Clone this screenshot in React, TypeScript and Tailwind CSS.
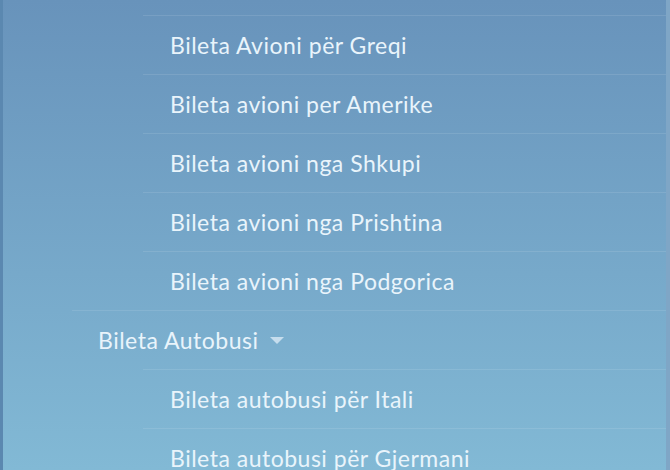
import React from 'react'

type Item = { label: string; level: 1 | 2; caret?: boolean }

const items: Item[] = [
  { label: 'Bileta Avioni për Greqi', level: 2 },
  { label: 'Bileta avioni per Amerike', level: 2 },
  { label: 'Bileta avioni nga Shkupi', level: 2 },
  { label: 'Bileta avioni nga Prishtina', level: 2 },
  { label: 'Bileta avioni nga Podgorica', level: 2 },
  { label: 'Bileta Autobusi', level: 1, caret: true },
  { label: 'Bileta autobusi për Itali', level: 2 },
  { label: 'Bileta autobusi për Gjermani', level: 2 },
]

const MenuRow = ({ item }: { item: Item }) => {
  const sub = item.level === 2
  return (
    <li className={sub ? 'pl-[140px]' : 'pl-[69px]'}>
      <div className="flex h-[59px] items-center border-t border-white/10">
        <a
          href="#"
          className={`flex items-center gap-3 whitespace-nowrap text-[23px] leading-none tracking-[0.5px] text-[#e9f4fb] ${sub ? 'pl-[27px]' : 'pl-[26px]'}`}
        >
          {item.label}
          {item.caret && (
            <svg width="14" height="8" viewBox="0 0 14 8" className="mt-[1px]">
              <path d="M0 0h14L7 7z" fill="#c6dded" />
            </svg>
          )}
        </a>
      </div>
    </li>
  )
}

const App = () => {
  return (
    <div
      className="h-[470px] w-[670px] overflow-hidden border-l-[3px] border-r-[4px] border-l-[#5b88b0] border-r-[#7fa6c6] bg-gradient-to-b from-[#6893bb] to-[#82b9d5]"
      style={{ fontFamily: 'Lato, "Liberation Sans", sans-serif' }}
    >
      <ul className="pt-[15px]">
        {items.map((item) => (
          <MenuRow key={item.label} item={item} />
        ))}
      </ul>
    </div>
  )
}

export default App
